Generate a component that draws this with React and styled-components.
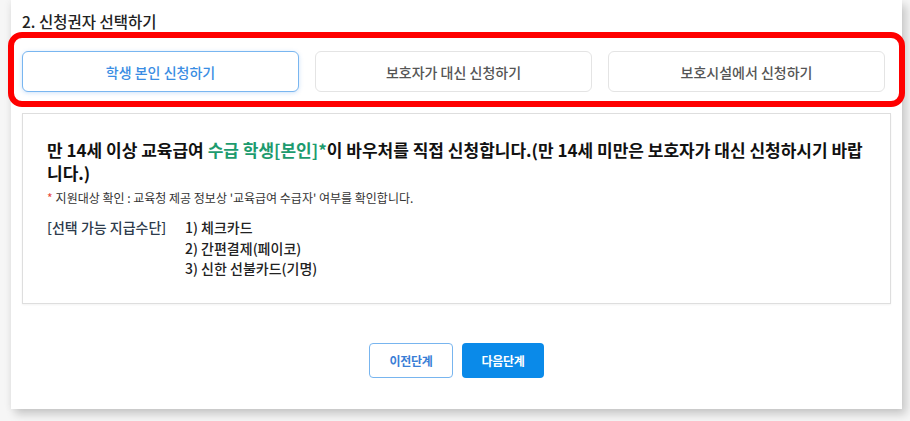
import React from "react";
import styled, { createGlobalStyle } from "styled-components";

const Global = createGlobalStyle`
  html, body { margin: 0; padding: 0; }
  body {
    background: #f6f6f6;
    font-family: "Noto Sans CJK KR", "Noto Sans", sans-serif;
    width: 910px;
    height: 421px;
    overflow: hidden;
  }
  * { box-sizing: border-box; }
`;

const Page = styled.div`
  width: 910px;
  height: 421px;
  padding-left: 11px;
`;

const Panel = styled.section`
  width: 891px;
  height: 409px;
  background: #fff;
  box-shadow: 4px 5px 9px rgba(0, 0, 0, 0.2), -3px 0 6px rgba(0, 0, 0, 0.03);
  padding: 10px 11px 0 11px;
  display: flex;
  flex-direction: column;
`;

const Title = styled.h2`
  margin: 0;
  font-size: 15.5px;
  line-height: 22px;
  font-weight: 500;
  color: #222;
`;

const TabArea = styled.div`
  position: relative;
  margin-top: 19px;
  margin-right: 6px;
`;

const Tabs = styled.div`
  display: grid;
  grid-template-columns: repeat(3, 1fr);
  gap: 16px;
`;

const Tab = styled.button`
  height: 41px;
  border-radius: 6px;
  background: #fff;
  font-family: inherit;
  font-size: 14px;
  font-weight: 500;
  border: 1px solid ${(p) => (p.$active ? "#79b6f0" : "#e4e4e4")};
  color: ${(p) => (p.$active ? "#3a8de3" : "#555")};
  box-shadow: ${(p) => (p.$active ? "0 1px 4px rgba(60,140,230,0.25)" : "none")};
  cursor: pointer;
`;

const Highlight = styled.div`
  position: absolute;
  top: -19px;
  left: -14px;
  right: -20px;
  bottom: -15px;
  border: 6px solid #ff0000;
  border-radius: 14px;
  pointer-events: none;
`;

const InfoBox = styled.div`
  margin-top: 21px;
  border: 1px solid #dedede;
  box-shadow: 0 1px 2px rgba(0, 0, 0, 0.05);
  padding: 25px 24px 23px 24px;
  height: 191px;
`;

const Lead = styled.p`
  margin: 0;
  font-size: 17px;
  line-height: 22.5px;
  font-weight: 700;
  color: #111;
`;

const Green = styled.span`
  color: #1d9b6e;
`;

const Note = styled.p`
  margin: 6px 0 0;
  font-size: 12px;
  line-height: 16px;
  color: #333;
`;

const Star = styled.span`
  color: #e8473c;
  margin-right: 3px;
`;

const Methods = styled.div`
  margin-top: 11px;
  display: grid;
  grid-template-columns: 138px 1fr;
  font-size: 14px;
  line-height: 20.5px;
`;

const MethodLabel = styled.div`
  color: #2d3b4c;
  font-weight: 500;
`;

const MethodList = styled.ul`
  margin: 0;
  padding: 0;
  list-style: none;
  color: #222;
  font-weight: 500;
`;

const Actions = styled.div`
  margin-top: 39px;
  display: flex;
  justify-content: center;
  gap: 9px;
`;

const StepButton = styled.button`
  height: 35px;
  width: ${(p) => (p.$primary ? "82px" : "84px")};
  border-radius: 4px;
  font-family: inherit;
  font-size: 12px;
  font-weight: 700;
  letter-spacing: -0.3px;
  cursor: pointer;
  border: ${(p) => (p.$primary ? "none" : "1.5px solid #78b5ef")};
  background: ${(p) => (p.$primary ? "#0a8ae9" : "#fff")};
  color: ${(p) => (p.$primary ? "#fff" : "#3a7ed6")};
`;

const tabs = ["학생 본인 신청하기", "보호자가 대신 신청하기", "보호시설에서 신청하기"];
const methods = ["1) 체크카드", "2) 간편결제(페이코)", "3) 신한 선불카드(기명)"];

export default function App() {
  return (
    <>
      <Global />
      <Page>
        <Panel>
          <Title>2. 신청권자 선택하기</Title>
          <TabArea>
            <Tabs>
              {tabs.map((t, i) => (
                <Tab key={t} $active={i === 0}>
                  {t}
                </Tab>
              ))}
            </Tabs>
            <Highlight />
          </TabArea>
          <InfoBox>
            <Lead>
              만 14세 이상 교육급여 <Green>수급 학생[본인]*</Green>이 바우처를 직접 신청합니다.(만 14세
              미만은 보호자가 대신 신청하시기 바랍니다.)
            </Lead>
            <Note>
              <Star>*</Star>지원대상 확인 : 교육청 제공 정보상 '교육급여 수급자' 여부를 확인합니다.
            </Note>
            <Methods>
              <MethodLabel>[선택 가능 지급수단]</MethodLabel>
              <MethodList>
                {methods.map((m) => (
                  <li key={m}>{m}</li>
                ))}
              </MethodList>
            </Methods>
          </InfoBox>
          <Actions>
            <StepButton>이전단계</StepButton>
            <StepButton $primary>다음단계</StepButton>
          </Actions>
        </Panel>
      </Page>
    </>
  );
}
